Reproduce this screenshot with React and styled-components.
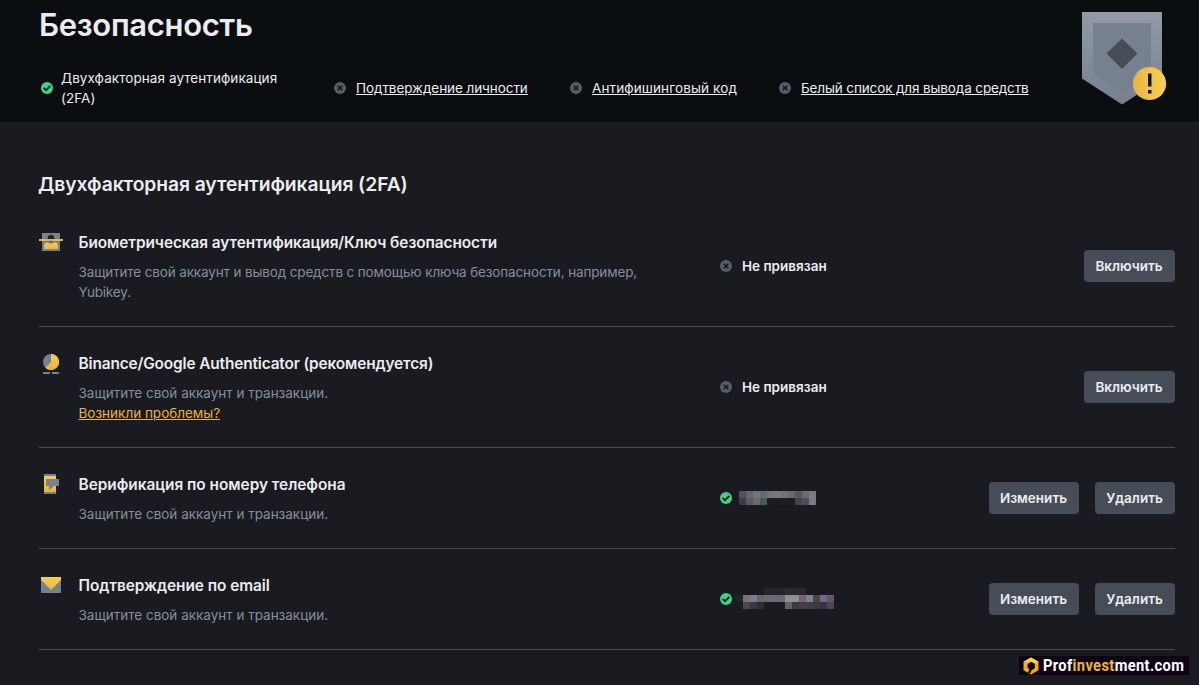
import React from "react";
import styled, { createGlobalStyle } from "styled-components";

const GlobalStyle = createGlobalStyle`
  *, *::before, *::after { box-sizing: border-box; }
  body {
    margin: 0;
    background: #1a1b20;
    color: #eaecef;
    font-family: Inter, "Noto Sans", sans-serif;
    font-size: 13.5px;
    line-height: 20px;
    overflow: hidden;
  }
  h1, h2, h3, p { margin: 0; }
  svg { display: block; flex: none; }
`;

const Page = styled.div`
  position: relative;
  width: 1199px;
  height: 685px;
  overflow: hidden;
  background: #1a1b20;
  white-space: nowrap;
`;

const Header = styled.header`
  display: flex;
  justify-content: space-between;
  height: 122px;
  padding: 5px 32px 0 39px;
  background: #0b0e11;
`;

const Title = styled.h1`
  font-size: 31px;
  font-weight: 600;
  line-height: 40px;
  letter-spacing: ${(p) => p.$track}px;
`;

const Checks = styled.div`
  display: flex;
  align-items: center;
  height: 40px;
  margin-top: 23px;
`;

const Check = styled.div`
  display: flex;
  align-items: center;
  gap: ${(p) => p.$gap}px;
  width: ${(p) => p.$width}px;
  padding-left: 2px;
`;

const CheckLabel = styled.span`
  letter-spacing: ${(p) => p.$track}px;
  text-decoration: ${(p) => (p.$link ? "underline" : "none")};
  text-underline-offset: 1px;
`;

const Badge = styled.div`
  padding-top: 6px;
`;

const Main = styled.main`
  padding: 46px 24px 0 39px;
`;

const SectionTitle = styled.h2`
  height: 38px;
  margin-left: -1px;
  font-size: 19.3px;
  font-weight: 600;
  line-height: 32px;
  letter-spacing: ${(p) => p.$track}px;
`;

const Row = styled.section`
  display: flex;
  padding: 24px 0;
  border-bottom: 1px solid #4a4c52;
`;

const RowIcon = styled.div`
  width: 39.5px;
  height: 24px;
`;

const Info = styled.div`
  width: 641.5px;
`;

const RowTitle = styled.h3`
  margin-bottom: 6px;
  font-size: 15.4px;
  font-weight: 600;
  line-height: 26px;
  letter-spacing: ${(p) => p.$track}px;
`;

const Description = styled.p`
  color: #848e9c;
  letter-spacing: ${(p) => p.$track}px;
`;

const HelpLink = styled.a`
  color: #e8b342;
  letter-spacing: ${(p) => p.$track}px;
  text-decoration: underline;
  text-underline-offset: 1px;
`;

const Status = styled.div`
  display: flex;
  flex: 1;
  align-items: center;
`;

const StatusText = styled.span`
  margin-left: 10px;
  font-weight: 600;
  letter-spacing: ${(p) => p.$track}px;
`;

const Mosaic = styled.div`
  display: grid;
  grid-template-columns: repeat(${(p) => p.$columns}, 7px);
  grid-auto-rows: 7px;
  margin-left: ${(p) => p.$left}px;
  margin-bottom: ${(p) => p.$lift}px;
`;

const Tile = styled.i`
  background: ${(p) => p.$color};
`;

const Actions = styled.div`
  display: flex;
  align-items: center;
  gap: 16px;
`;

const Button = styled.button`
  width: ${(p) => p.$width}px;
  height: 32px;
  padding: 0 1px 0 0;
  border: 0;
  border-radius: 4px;
  background: #474d57;
  color: #eaecef;
  font: 600 13.5px/20px Inter, "Noto Sans", sans-serif;
  text-align: center;
`;

const Watermark = styled.div`
  position: absolute;
  left: 1019px;
  top: 656px;
  display: flex;
  align-items: center;
  width: 170px;
  height: 19px;
  padding-left: 4px;
  background: #0d0314;
`;

const WatermarkText = styled.span`
  margin-left: 4px;
  color: #fff;
  font: 700 16.5px/19px Roboto, sans-serif;
  letter-spacing: 0.4px;
  transform: scaleX(${(p) => p.$stretch});
  transform-origin: left center;
`;

const Accent = styled.span`
  color: #efb33e;
`;

function StateIcon({ ok }) {
  return (
    <svg width="12" height="12" viewBox="0 0 12 12">
      <circle cx="6" cy="6" r="6" fill={ok ? "#41d283" : "#565d69"} />
      {ok ? (
        <path d="M2.600 5.900 5 8.200 9.400 3.900" fill="none" stroke="#1a1b20" strokeWidth="1.8" />
      ) : (
        <path d="m3.700 3.700 4.600 4.600m0-4.600L3.700 8.300" fill="none" stroke="#15181d" strokeWidth="1.6" />
      )}
    </svg>
  );
}

function ShieldBadge() {
  return (
    <svg width="85" height="94" viewBox="0 0 85 94">
      <defs>
        <linearGradient id="rim" x1="0" y1="0" x2="0" y2="1">
          <stop stopColor="#929aa5" />
          <stop offset="1" stopColor="#76808f" />
        </linearGradient>
        <linearGradient id="alert" x1="0" y1="0" x2="1" y2="0">
          <stop stopColor="#e9b53d" />
          <stop offset="1" stopColor="#f5d251" />
        </linearGradient>
      </defs>
      <path d="M0 1h80v66.500L40 93.500 0 67.500Z" fill="url(#rim)" />
      <path d="M11 12h58v51.500L40 82 11 63.500Z" fill="#76808f" />
      <path d="m40 27.500 15.500 15L40 58 24.500 42.500Z" fill="#474d57" />
      <circle cx="67.500" cy="72.500" r="16.600" fill="url(#alert)" />
      <path d="M66 62.500h3.500v13H66zM66 79h3.500v3.500H66z" fill="#14151a" />
    </svg>
  );
}

function RowGlyph({ kind }) {
  return (
    <svg width="24" height="24" viewBox="0 0 24 24">
      <defs>
        <linearGradient id={"gold-" + kind} x1="0" y1="1" x2="0" y2="0">
          <stop stopColor="#e9b53d" />
          <stop offset="1" stopColor="#f5d04f" />
        </linearGradient>
      </defs>
      {kind === "key" && (
        <>
          <path d="M3 3h18v18H3z" fill="#76808f" />
          <circle cx="12" cy="8.200" r="3.300" fill="#1e2126" />
          <path d="M5 19v-3.500A3.500 3.500 0 0 1 8.500 12.500C10 14 14 14 15.500 12.500A3.500 3.500 0 0 1 19 15.500V19Z" fill="url(#gold-key)" />
          <path d="M0 9h24v2H0z" fill="#e9b53d" />
        </>
      )}
      {kind === "app" && (
        <>
          <circle cx="12" cy="11" r="8" fill="#76808f" />
          <path d="M12 3a8 8 0 1 1-5.500 13.800L12 11Z" fill="url(#gold-app)" />
          <path d="M4 21h7v2H4zM13 21h7v2h-7z" fill="#76808f" />
        </>
      )}
      {kind === "phone" && (
        <>
          <path d="M5 2h12v20H5z" fill="#76808f" />
          <path d="M5 4h12v16H5z" fill="url(#gold-phone)" />
          <path d="M7 7h13v7h-5l-5 4v-4H7z" fill="#76808f" />
        </>
      )}
      {kind === "mail" && (
        <>
          <path d="M2 4h20v16H2z" fill="#76808f" />
          <path d="M2 4h20v3L12 17 2 7z" fill="url(#gold-mail)" />
        </>
      )}
    </svg>
  );
}

function HexLogo() {
  return (
    <svg width="16" height="18" viewBox="0 0 16 18">
      <path d="M8 0.500 15.500 4.800v8.400L8 17.500 0.500 13.200V4.800Z" fill="#f6a72c" />
      <path d="M8 0.500 15.500 4.800 11 7 8 5.500 0.500 4.800Z" fill="#ffd34d" />
      <path d="M8.300 4.800 11.800 6.800v4.400L8.600 13.200 7 16.800 5 15.500 6.500 12 4.600 11V7Z" fill="#0d0314" />
    </svg>
  );
}

const phoneTiles = "#4c535c #65656b #727477 #616b73 #747579 #78797d #727379 #69696b #5b555d #6a6a70 #7c7c79 #353e4a #5b5a60 #6a6a69 #505657 #1c1d21 #1d1e23 #1c1e21 #1d1e21 #484349 #47515d #7c7c79".split(" ");
const mailTiles = [
  "#1a1b20 #1a1b20 #1a1b20 #1a1b20 #25262a #25262a #25262a #292c31 #27292d #2c272d #1a1b20 #1a1b20 #1a1b20 #1a1b20",
  "#192630 #7b7469 #7b7c8f #62656d #6c686e #6c6a6e #646d77 #918d94 #8c918d #755f70 #80818b #4f4341 #6b6b8e #605866",
  "#1a1b20 #4c4a50 #34373d #2c2e31 #1a1b20 #1a1b20 #1a1b20 #5d636b #3a3c40 #403f43 #403e42 #3d3b3f #2f3643 #4b484d",
].flatMap((line) => line.split(" "));

const checks = [
  { label: "Подтверждение личности", width: 236, gap: 10, track: -0.07 },
  { label: "Антифишинговый код", width: 209, gap: 10, track: 0.12 },
  { label: "Белый список для вывода средств", width: 260, gap: 10, track: -0.125 },
];

const rows = [
  {
    kind: "key",
    title: "Биометрическая аутентификация/Ключ безопасности",
    track: -0.07,
    lines: [
      { text: "Защитите свой аккаунт и вывод средств с помощью ключа безопасности, например,", track: -0.135 },
      { text: "Yubikey.", track: -0.2 },
    ],
  },
  {
    kind: "app",
    title: "Binance/Google Authenticator (рекомендуется)",
    track: -0.13,
    lines: [{ text: "Защитите свой аккаунт и транзакции.", track: 0 }],
    help: "Возникли проблемы?",
  },
  {
    kind: "phone",
    title: "Верификация по номеру телефона",
    track: -0.02,
    lines: [{ text: "Защитите свой аккаунт и транзакции.", track: 0 }],
    tiles: phoneTiles,
    columns: 11,
    left: 7,
    lift: 0,
  },
  {
    kind: "mail",
    title: "Подтверждение по email",
    track: -0.05,
    lines: [{ text: "Защитите свой аккаунт и транзакции.", track: 0 }],
    tiles: mailTiles,
    columns: 14,
    left: 4,
    lift: 1,
  },
];

export default function App() {
  return (
    <Page>
      <GlobalStyle />
      <Header>
        <div>
          <Title $track={-0.3}>Безопасность</Title>
          <Checks>
            <Check $width={293} $gap={8}>
              <StateIcon ok />
              <CheckLabel $track={0.07}>
                Двухфакторная аутентификация
                <br />
                (2FA)
              </CheckLabel>
            </Check>
            {checks.map((c) => (
              <Check key={c.label} $width={c.width} $gap={c.gap}>
                <StateIcon />
                <CheckLabel $link $track={c.track}>{c.label}</CheckLabel>
              </Check>
            ))}
          </Checks>
        </div>
        <Badge>
          <ShieldBadge />
        </Badge>
      </Header>
      <Main>
        <SectionTitle $track={-0.08}>Двухфакторная аутентификация (2FA)</SectionTitle>
        {rows.map((r) => (
          <Row key={r.kind}>
            <RowIcon>
              <RowGlyph kind={r.kind} />
            </RowIcon>
            <Info>
              <RowTitle $track={r.track}>{r.title}</RowTitle>
              {r.lines.map((l) => (
                <Description key={l.text} $track={l.track}>{l.text}</Description>
              ))}
              {r.help && <HelpLink $track={0}>{r.help}</HelpLink>}
            </Info>
            <Status>
              <StateIcon ok={!!r.tiles} />
              {r.tiles ? (
                <Mosaic $columns={r.columns} $left={r.left} $lift={r.lift}>
                  {r.tiles.map((color, i) => (
                    <Tile key={i} $color={color} />
                  ))}
                </Mosaic>
              ) : (
                <StatusText $track={0}>Не привязан</StatusText>
              )}
            </Status>
            <Actions>
              {r.tiles ? (
                <>
                  <Button $width={90}>Изменить</Button>
                  <Button $width={80}>Удалить</Button>
                </>
              ) : (
                <Button $width={91}>Включить</Button>
              )}
            </Actions>
          </Row>
        ))}
      </Main>
      <Watermark>
        <HexLogo />
        <WatermarkText $stretch={0.89}>
          Prof<Accent>invest</Accent>ment.com
        </WatermarkText>
      </Watermark>
    </Page>
  );
}
